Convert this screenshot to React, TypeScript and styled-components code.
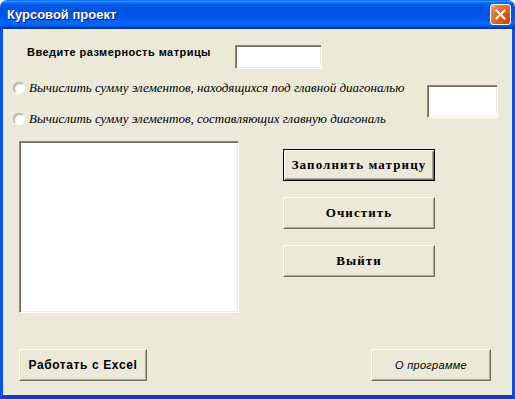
import React from "react";
import styled, { createGlobalStyle } from "styled-components";

const Global = createGlobalStyle`
  html, body { margin: 0; padding: 0; background: #ffffff; }
  #root { width: 515px; height: 399px; }
`;

const Window = styled.div`
  width: 515px;
  height: 399px;
  display: flex;
  flex-direction: column;
  box-sizing: border-box;
`;

const TitleBar = styled.div`
  height: 29px;
  flex: none;
  display: flex;
  align-items: center;
  justify-content: space-between;
  padding: 0 4px 0 7px;
  border-radius: 7px 7px 0 0;
  background: linear-gradient(
    to bottom,
    #0058ee 0%,
    #3593ff 4%,
    #288eff 6%,
    #127dff 8%,
    #036ffc 10%,
    #0262ee 14%,
    #0057e5 20%,
    #0054e3 24%,
    #0055eb 56%,
    #005bf5 66%,
    #026afe 76%,
    #0062ef 86%,
    #0052d6 92%,
    #0040ab 94%,
    #003092 100%
  );
  box-sizing: border-box;
`;

const Title = styled.span`
  font-family: "Liberation Sans", Arial, sans-serif;
  font-weight: bold;
  font-size: 13px;
  color: #ffffff;
  text-shadow: 1px 1px 0 #0a1883;
`;

const CloseButton = styled.div`
  width: 21px;
  height: 21px;
  box-sizing: border-box;
  border: 1px solid #ffffff;
  border-radius: 3px;
  background: radial-gradient(circle at 90% 90%, #cc4600 0%, #dc6527 55%, #e58459 80%, #f3b79d 100%);
  display: flex;
  align-items: center;
  justify-content: center;
  margin-bottom: 1px;
`;

const Body = styled.div`
  flex: 1;
  display: flex;
  flex-direction: column;
  background: #ece9d8;
  border-left: 3px solid #0553ef;
  border-right: 3px solid #0553ef;
  border-bottom: 4px solid #0641d6;
  box-sizing: border-box;
`;

const SizeRow = styled.div`
  display: flex;
  align-items: flex-start;
  margin-top: 16px;
  padding-left: 24px;
`;

const Label = styled.span`
  width: 208px;
  font-family: "Liberation Sans", Tahoma, sans-serif;
  font-weight: bold;
  font-size: 11px;
  line-height: 14px;
  color: #000000;
  letter-spacing: 0.45px;
`;

const TextBox = styled.div<{ $w: number; $h: number }>`
  width: ${(p) => p.$w}px;
  height: ${(p) => p.$h}px;
  box-sizing: border-box;
  background: #ffffff;
  border: 1px solid;
  border-color: #8c8a7e #ffffff #ffffff #8c8a7e;
  box-shadow: inset 1px 1px 0 #716f64, inset -1px -1px 0 #f1efe2;
`;

const OptionsRow = styled.div`
  display: flex;
  align-items: flex-start;
  justify-content: space-between;
  margin-top: 12px;
  padding-left: 10px;
  padding-right: 14px;
`;

const RadioColumn = styled.div`
  display: flex;
  flex-direction: column;
  gap: 17px;
`;

const RadioRow = styled.label`
  display: flex;
  align-items: center;
  gap: 4px;
  height: 14px;
`;

const RadioCircle = styled.span`
  width: 12px;
  height: 12px;
  box-sizing: border-box;
  border-radius: 50%;
  border: 1px solid;
  border-color: #a7a597 #ffffff #ffffff #a7a597;
  background: radial-gradient(circle at 65% 65%, #ffffff 40%, #e6e4d8 100%);
  box-shadow: inset 1px 1px 0 #c9c7bb;
  flex: none;
`;

const RadioText = styled.span`
  font-family: "Liberation Serif", "Times New Roman", serif;
  font-style: italic;
  font-size: 13px;
  line-height: 14px;
  color: #000000;
  white-space: nowrap;
`;

const SideBox = styled(TextBox)`
  margin-top: 4px;
`;

const MainRow = styled.div`
  display: flex;
  align-items: flex-start;
  margin-top: 15px;
  padding-left: 16px;
`;

const ListBox = styled(TextBox)``;

const ButtonColumn = styled.div`
  display: flex;
  flex-direction: column;
  gap: 16px;
  margin-left: 44px;
  margin-top: 8px;
`;

const Button = styled.div<{ $w: number; $default?: boolean }>`
  width: ${(p) => p.$w}px;
  height: 32px;
  box-sizing: border-box;
  display: flex;
  align-items: center;
  justify-content: center;
  background: #ece9d8;
  border: 1px solid;
  border-color: ${(p) => (p.$default ? "#000000" : "#ffffff #716f64 #716f64 #ffffff")};
  box-shadow: ${(p) =>
    p.$default
      ? "inset 1px 1px 0 #ffffff, inset -1px -1px 0 #716f64, inset -2px -2px 0 #aca899"
      : "inset -1px -1px 0 #aca899"};
`;

const SerifLabel = styled.span`
  font-family: "Liberation Serif", "Times New Roman", serif;
  font-weight: bold;
  font-size: 13px;
  letter-spacing: 1.1px;
  color: #000000;
  white-space: nowrap;
`;

const BottomRow = styled.div`
  display: flex;
  justify-content: space-between;
  margin-top: auto;
  margin-bottom: 14px;
  padding-left: 16px;
  padding-right: 21px;
`;

const ExcelLabel = styled.span`
  font-family: "Liberation Sans", Tahoma, sans-serif;
  font-weight: bold;
  font-size: 12px;
  letter-spacing: 0.6px;
  color: #000000;
  white-space: nowrap;
`;

const AboutLabel = styled.span`
  font-family: "Liberation Sans", Tahoma, sans-serif;
  font-style: italic;
  font-size: 11px;
  letter-spacing: 0.3px;
  color: #000000;
  white-space: nowrap;
`;

export default function App() {
  return (
    <>
      <Global />
      <Window>
        <TitleBar>
          <Title>Курсовой проект</Title>
          <CloseButton>
            <svg width="11" height="11" viewBox="0 0 11 11">
              <path d="M1.5 1.5 L9.5 9.5 M9.5 1.5 L1.5 9.5" stroke="#ffffff" strokeWidth="2" strokeLinecap="square" />
            </svg>
          </CloseButton>
        </TitleBar>
        <Body>
          <SizeRow>
            <Label>Введите размерность матрицы</Label>
            <TextBox $w={87} $h={24} />
          </SizeRow>
          <OptionsRow>
            <RadioColumn>
              <RadioRow>
                <RadioCircle />
                <RadioText>Вычислить сумму элементов, находящихся под главной диагональю</RadioText>
              </RadioRow>
              <RadioRow>
                <RadioCircle />
                <RadioText>Вычислить сумму элементов, составляющих главную диагональ</RadioText>
              </RadioRow>
            </RadioColumn>
            <SideBox $w={71} $h={33} />
          </OptionsRow>
          <MainRow>
            <ListBox $w={220} $h={172} />
            <ButtonColumn>
              <Button $w={152} $default>
                <SerifLabel>Заполнить матрицу</SerifLabel>
              </Button>
              <Button $w={152}>
                <SerifLabel>Очистить</SerifLabel>
              </Button>
              <Button $w={152}>
                <SerifLabel>Выйти</SerifLabel>
              </Button>
            </ButtonColumn>
          </MainRow>
          <BottomRow>
            <Button $w={128}>
              <ExcelLabel>Работать с Excel</ExcelLabel>
            </Button>
            <Button $w={120}>
              <AboutLabel>О программе</AboutLabel>
            </Button>
          </BottomRow>
        </Body>
      </Window>
    </>
  );
}
